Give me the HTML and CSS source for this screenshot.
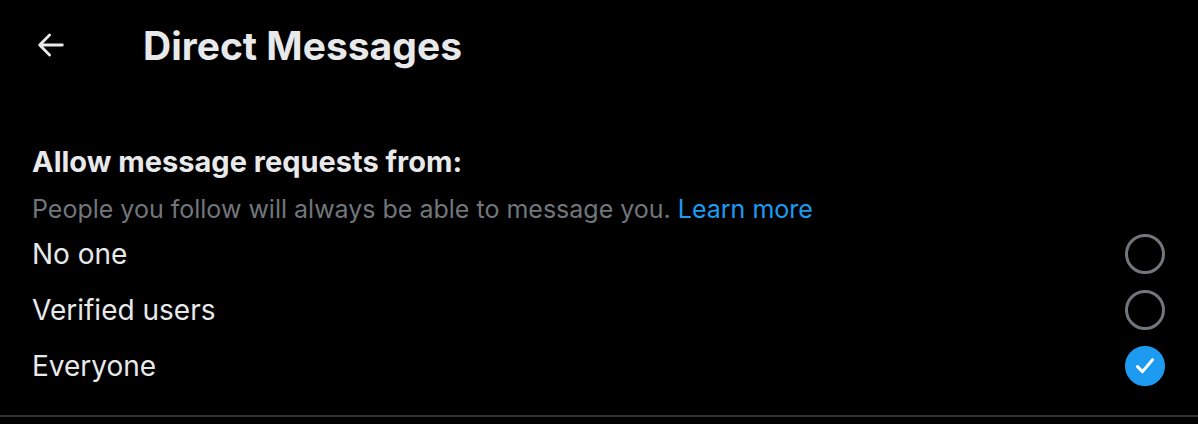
FILE: index.html
```html
<!DOCTYPE html>
<html lang="en">
<head>
    <meta charset="UTF-8">
    <title>Direct Messages</title>
    <link rel="stylesheet" href="styles.css">
</head>
<body>
    <div class="page">
        <div class="header">
            <span class="back">
                <svg viewBox="0 0 24 24" width="34" height="34"><path d="M20 12H4.5M11 5l-7 7 7 7" fill="none" stroke="#e7e9ea" stroke-width="2" stroke-linecap="round" stroke-linejoin="round"/></svg>
            </span>
            <h1>Direct Messages</h1>
        </div>

        <div class="section">
            <h2>Allow message requests from:</h2>
            <p class="hint">People you follow will always be able to message you. <a href="#">Learn more</a></p>

            <div class="option">
                <span>No one</span>
                <span class="radio"></span>
            </div>
            <div class="option">
                <span>Verified users</span>
                <span class="radio"></span>
            </div>
            <div class="option">
                <span>Everyone</span>
                <span class="radio checked">
                    <svg viewBox="0 0 24 24" width="30" height="30"><path d="M6 12.5l4 4 8-9.5" fill="none" stroke="#fff" stroke-width="2.4" stroke-linecap="round" stroke-linejoin="round"/></svg>
                </span>
            </div>
        </div>
    </div>
</body>
</html>
```

FILE: styles.css
```css
body {
    margin: 0;
    background: #000;
    color: #e7e9ea;
    font-family: Inter, "Liberation Sans", sans-serif;
}
.page {
    height: 417px;
    border-bottom: 2px solid #2f3336;
    box-sizing: border-box;
}
.header {
    display: flex;
    align-items: center;
    height: 90px;
    padding-left: 34px;
}
.back {
    display: flex;
    width: 34px;
    margin-right: 75px;
}
h1 {
    margin: 0;
    font-size: 39px;
    font-weight: 700;
}
.section {
    padding: 54px 33px 0 32px;
}
h2 {
    margin: 0;
    font-size: 29px;
    font-weight: 700;
    line-height: 36px;
}
.hint {
    margin: 13px 0 1px;
    font-size: 25px;
    line-height: 32px;
    color: #71767b;
}
.hint a {
    color: #1d9bf0;
    text-decoration: none;
}
.option {
    display: flex;
    align-items: center;
    justify-content: space-between;
    height: 56px;
    font-size: 28px;
}
.radio {
    width: 40px;
    height: 40px;
    border: 3px solid #71767b;
    border-radius: 50%;
    box-sizing: border-box;
    display: flex;
    align-items: center;
    justify-content: center;
}
.radio.checked {
    background: #1d9bf0;
    border-color: #1d9bf0;
}
```
